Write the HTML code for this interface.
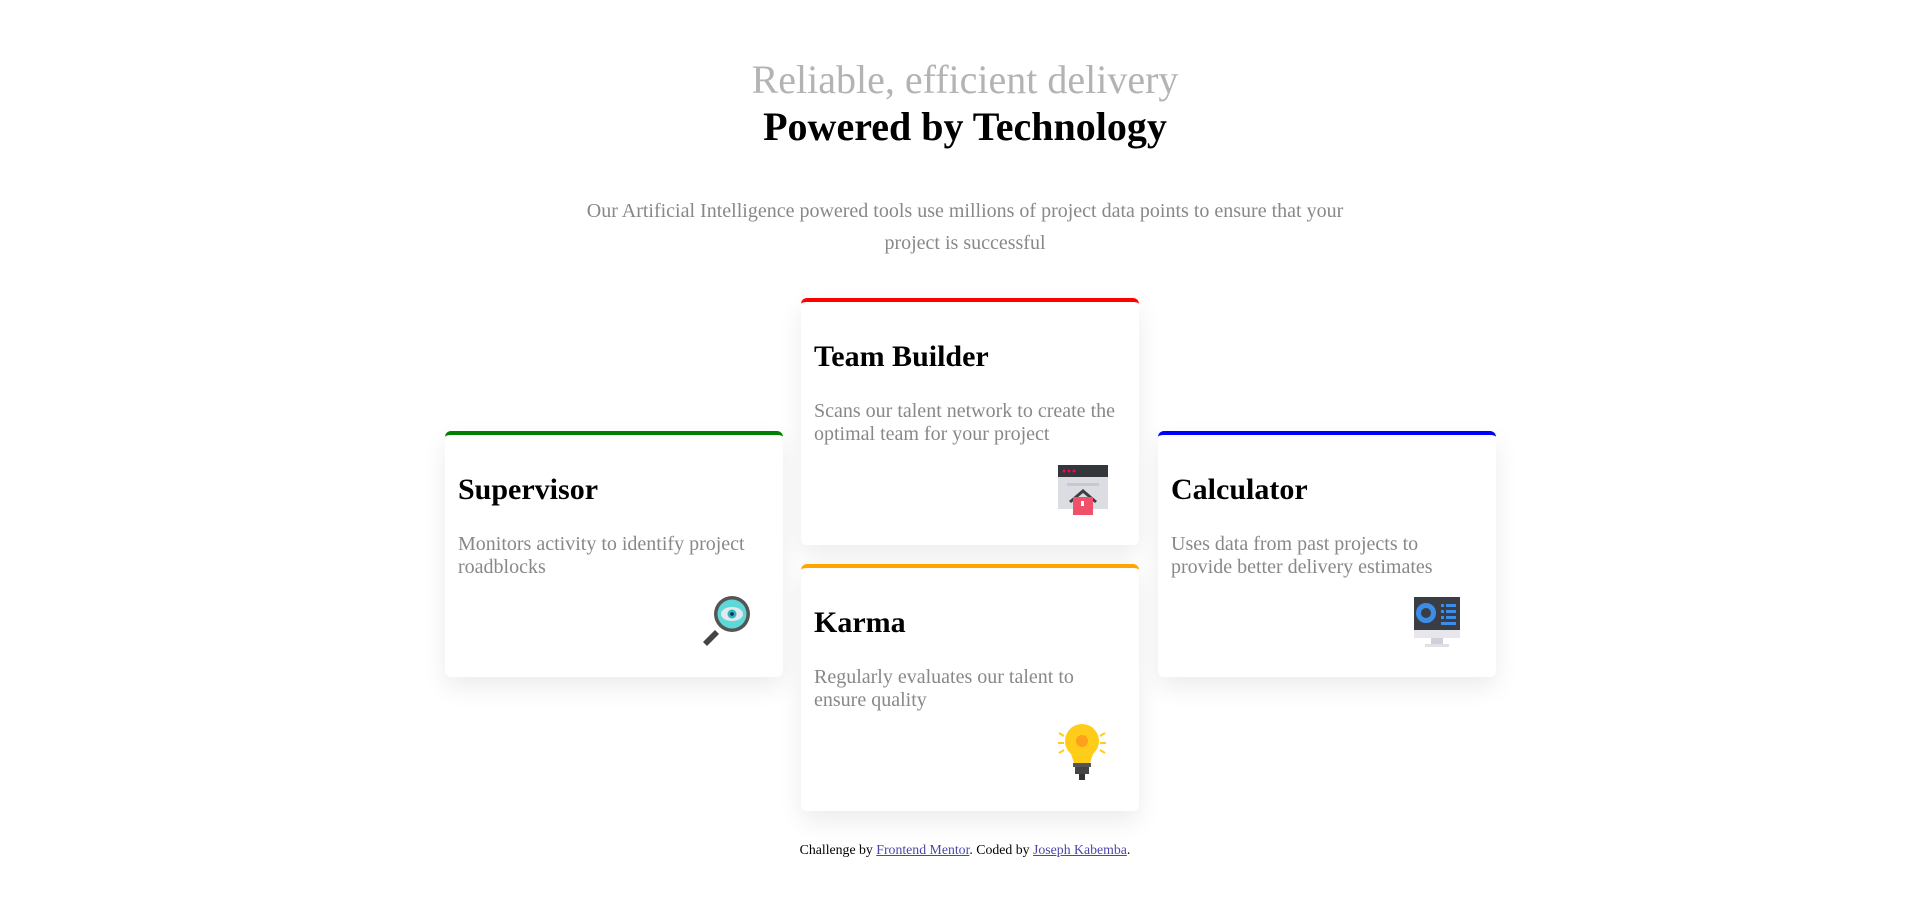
<!DOCTYPE html>
<html><head><meta charset="utf-8"><style>
*{margin:0;padding:0;box-sizing:border-box}
body{width:1930px;height:902px;background:#fff;font-family:"Liberation Serif",serif;position:relative;overflow:hidden}
.c{position:absolute;left:0;width:1930px;text-align:center}
.h1{top:56px;font-size:40px;color:#b3b3b3;line-height:48px}
.h2{top:103px;font-size:40px;font-weight:bold;color:#000;line-height:48px}
.p{top:195px;left:566px;width:798px;font-size:20px;color:#888;line-height:32px;text-align:center;position:absolute}
.card{position:absolute;width:338px;background:#fff;border-radius:6px;border-top:4px solid;box-shadow:0 10px 25px rgba(0,0,0,0.08);padding:0 13px}
.card h3{font-size:30px;font-weight:bold;margin-top:37px;line-height:36px;color:#000}
.card p{font-size:20px;color:#888;line-height:23px;margin-top:25px}
.card svg{position:absolute;right:31px;bottom:30px}
.f{top:842px;font-size:13.8px;color:#000}
.f a{color:#4848a8;text-decoration:underline}
</style></head><body>
<div class="c h1">Reliable, efficient delivery</div>
<div class="c h2">Powered by Technology</div>
<div class="p">Our Artificial Intelligence powered tools use millions of project data points to ensure that your project is successful</div>

<div class="card" style="left:445px;top:431px;height:246px;border-color:#008000">
<h3>Supervisor</h3><p>Monitors activity to identify project roadblocks</p>
<svg width="52" height="52" viewBox="0 0 52 52" style="right:32px;bottom:31px"><path d="M4 48 L16 36 L20 40 L8 52Z" fill="#444"/><circle cx="33" cy="20" r="18" fill="#555"/><circle cx="33" cy="20" r="14.5" fill="#5fd8d8"/><ellipse cx="33" cy="20" rx="11" ry="7" fill="#e5e8ee"/><circle cx="33" cy="20" r="4.5" fill="#2bb7b7"/><circle cx="33" cy="20" r="1.8" fill="#126"/></svg>
</div>

<div class="card" style="left:801px;top:298px;height:247px;border-color:#ff0000">
<h3>Team Builder</h3><p>Scans our talent network to create the optimal team for your project</p>
<svg width="50" height="50" viewBox="0 0 50 50" style="right:31px;bottom:30px"><rect x="0" y="0" width="50" height="44" fill="#dcdde3"/><rect x="0" y="0" width="50" height="12" fill="#33363b"/><circle cx="6" cy="6" r="1.5" fill="#f05"/><circle cx="11" cy="6" r="1.5" fill="#f05"/><circle cx="16" cy="6" r="1.5" fill="#f05"/><rect x="9" y="18" width="32" height="3" fill="#c8c9cf"/><path d="M11 36 L25 24 L39 36 L37 38 L25 28 L13 38Z" fill="#3b3e44"/><rect x="15" y="32" width="20" height="18" fill="#f0506a"/><rect x="23" y="36" width="3" height="5" fill="#fff"/></svg>
</div>

<div class="card" style="left:801px;top:564px;height:247px;border-color:#ffa500">
<h3>Karma</h3><p>Regularly evaluates our talent to ensure quality</p>
<svg width="52" height="60" viewBox="0 0 52 60" style="right:31px;bottom:30px"><circle cx="26" cy="20" r="17" fill="#ffcc1a"/><path d="M14 30 L38 30 L34 42 L18 42Z" fill="#ffcc1a"/><circle cx="26" cy="20" r="6" fill="#ff9f1a"/><rect x="17" y="42" width="18" height="4" fill="#555"/><rect x="19" y="46" width="14" height="7" fill="#444"/><rect x="23" y="53" width="6" height="6" fill="#333"/><g stroke="#ffcc1a" stroke-width="2"><path d="M3 12l5 3M2 22h6M3 32l5-3M49 12l-5 3M50 22h-6M49 32l-5-3"/></g></svg>
</div>

<div class="card" style="left:1158px;top:431px;height:246px;border-color:#0000ff">
<h3>Calculator</h3><p>Uses data from past projects to provide better delivery estimates</p>
<svg width="46" height="50" viewBox="0 0 46 50" style="right:36px;bottom:30px"><rect x="0" y="0" width="46" height="33" fill="#3a3e44"/><rect x="0" y="33" width="46" height="8" fill="#e6e6ec"/><rect x="17" y="41" width="12" height="6" fill="#d0d0d8"/><rect x="11" y="47" width="24" height="3" fill="#e0e0e6"/><circle cx="12" cy="16" r="7.5" fill="none" stroke="#3b8de8" stroke-width="5"/><g fill="#3b8de8"><rect x="27" y="7" width="3" height="3"/><rect x="32" y="7" width="10" height="3"/><rect x="27" y="13" width="3" height="3"/><rect x="32" y="13" width="10" height="3"/><rect x="27" y="19" width="3" height="3"/><rect x="32" y="19" width="10" height="3"/><rect x="27" y="25" width="15" height="3"/></g></svg>
</div>

<div class="c f">Challenge by <a>Frontend Mentor</a>. Coded by <a>Joseph Kabemba</a>.</div>
</body></html>
